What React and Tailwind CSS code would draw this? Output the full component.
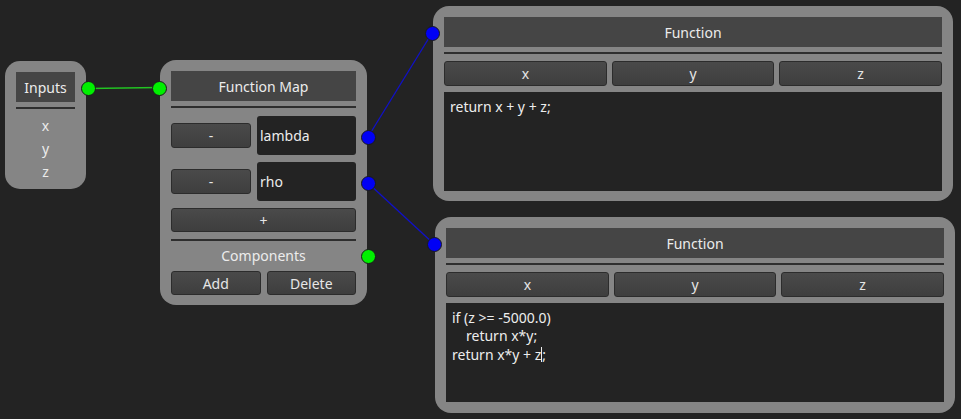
import React from 'react';

const font = { fontFamily: '"Noto Sans", "Open Sans", sans-serif' };

const Btn = ({ children, className = '' }) => (
  <div
    className={`flex items-center justify-center rounded-[3px] border border-[#2c2c2c] bg-gradient-to-b from-[#4a4a4a] to-[#3e3e3e] text-[14px] text-[#e6e6e6] ${className}`}
  >
    {children}
  </div>
);

const Title = ({ children }) => (
  <div className="flex h-[30px] items-center justify-center bg-[#454545] text-[14px] text-[#ececec]">
    {children}
  </div>
);

const Divider = ({ className = '' }) => <div className={`h-[2px] bg-[#2e2e2e] ${className}`} />;

const Port = ({ x, y, color }) => (
  <div
    className={`absolute h-[15px] w-[15px] rounded-full border border-[#1a1a1a] ${color}`}
    style={{ left: x - 7.5, top: y - 7.5 }}
  />
);

const FunctionNode = ({ left, top, height, code }) => (
  <div
    className="absolute flex w-[520px] flex-col rounded-[16px] bg-[#858585] px-[11px] pt-[11px]"
    style={{ left, top, height }}
  >
    <Title>Function</Title>
    <Divider className="mt-[5px]" />
    <div className="mt-[7px] grid grid-cols-3 gap-[5px]">
      <Btn className="h-[25px]">x</Btn>
      <Btn className="h-[25px]">y</Btn>
      <Btn className="h-[25px]">z</Btn>
    </div>
    <div className="mt-[6px] h-[99px] bg-[#232323] px-[6px] pt-[6px] text-[14px] leading-[18px] text-[#ededed]">
      {code}
    </div>
  </div>
);

export default function App() {
  return (
    <div className="relative h-[419px] w-[961px] overflow-hidden bg-[#232323]" style={font}>
      <svg className="absolute left-0 top-0" width="961" height="419">
        <line x1="88" y1="88.5" x2="159" y2="87.5" stroke="#22c322" strokeWidth="1.5" />
        <line x1="368" y1="137" x2="432" y2="33" stroke="#1010c8" strokeWidth="1.3" />
        <line x1="368" y1="183" x2="434" y2="244" stroke="#1010c8" strokeWidth="1.3" />
      </svg>

      {/* Inputs */}
      <div className="absolute left-[5px] top-[61px] flex h-[128px] w-[81px] flex-col rounded-[15px] bg-[#858585] px-[11px] pt-[11px]">
        <Title>Inputs</Title>
        <Divider className="mt-[5px]" />
        <div className="mt-[5px] flex flex-col items-center text-[14px] leading-[23px] text-[#ececec]">
          <span>x</span>
          <span>y</span>
          <span>z</span>
        </div>
      </div>

      {/* Function Map */}
      <div className="absolute left-[160px] top-[60px] flex h-[245px] w-[207px] flex-col rounded-[16px] bg-[#858585] px-[11px] pt-[11px]">
        <Title>Function Map</Title>
        <Divider className="mt-[5px]" />
        <div className="mt-[8px] flex flex-col gap-[7px]">
          {['lambda', 'rho'].map((name) => (
            <div key={name} className="flex items-center gap-[6px]">
              <Btn className="h-[25px] w-[80px]">-</Btn>
              <div className="flex h-[39px] flex-1 items-center rounded-[3px] bg-[#232323] px-[3px] text-[14px] text-[#ececec]">
                {name}
              </div>
            </div>
          ))}
        </div>
        <Btn className="mt-[7px] h-[24px]">+</Btn>
        <Divider className="mt-[7px]" />
        <div className="mt-[6px] text-center text-[14px] leading-[17px] text-[#ececec]">Components</div>
        <div className="mt-[7px] flex gap-[6px]">
          <Btn className="h-[24px] flex-1">Add</Btn>
          <Btn className="h-[24px] flex-1">Delete</Btn>
        </div>
      </div>

      <FunctionNode left={433} top={6} height={195} code={<div>return x + y + z;</div>} />
      <FunctionNode
        left={435}
        top={217}
        height={196}
        code={
          <>
            <div>if (z &gt;= -5000.0)</div>
            <div className="pl-[14px]">return x*y;</div>
            <div>
              return x*y + z<span className="inline-block h-[15px] w-px translate-y-[2px] bg-[#ededed]" />;
            </div>
          </>
        }
      />

      <Port x={88} y={88} color="bg-[#00f000]" />
      <Port x={159} y={88} color="bg-[#00f000]" />
      <Port x={368} y={137} color="bg-[#0000f5]" />
      <Port x={368} y={183} color="bg-[#0000f5]" />
      <Port x={368} y={256} color="bg-[#00f000]" />
      <Port x={432} y={33} color="bg-[#0000f5]" />
      <Port x={434} y={244} color="bg-[#0000f5]" />
    </div>
  );
}
